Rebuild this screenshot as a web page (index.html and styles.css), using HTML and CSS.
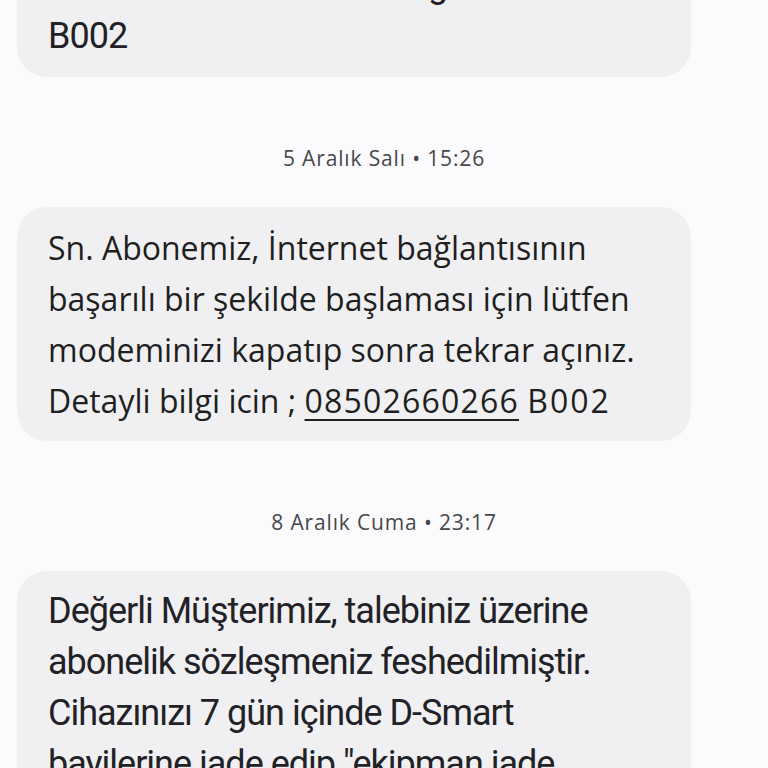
FILE: index.html
```html
<!DOCTYPE html>
<html lang="tr">
<head>
<meta charset="utf-8">
<link rel="stylesheet" href="styles.css">
</head>
<body>
<main class="thread">
  <div class="bubble bubble-first narrow">
    <p class="msg">Sn. Abonemiz randevu bilgileriniz<br>B002</p>
  </div>
  <div class="stamp">5 Aralık Salı • 15:26</div>
  <div class="bubble wide">
    <p class="msg">Sn. Abonemiz, İnternet bağlantısının<br>başarılı bir şekilde başlaması için lütfen<br>modeminizi kapatıp sonra tekrar açınız.<br>Detayli bilgi icin ; <span class="link">08502660266</span> <span class="code">B002</span></p>
  </div>
  <div class="stamp">8 Aralık Cuma • 23:17</div>
  <div class="bubble narrow">
    <p class="msg">Değerli Müşterimiz, talebiniz üzerine<br>abonelik sözleşmeniz feshedilmiştir.<br>Cihazınızı 7 gün içinde D-Smart<br>bayilerine iade edip "ekipman iade<br>formu" doldurmanız gerekmektedir.</p>
  </div>
</main>
</body>
</html>
```
FILE: styles.css
```css
html, body {
  margin: 0;
  padding: 0;
  background: #fbfbfd;
}
body {
  height: 768px;
  overflow: hidden;
}
.thread {
  display: flex;
  flex-direction: column;
  padding: 0 0 0 17px;
}
.bubble {
  width: 674px;
  box-sizing: border-box;
  background: #f0f0f2;
  border-radius: 30px;
  padding: 15px 20px 15px 31px;
}
.bubble-first {
  margin-top: -55px;
}
.msg {
  margin: 0;
  color: #1f1f1f;
  line-height: 51px;
  white-space: nowrap;
}
.wide .msg {
  font-family: "Open Sans", sans-serif;
  font-size: 32px;
}
.narrow .msg {
  font-family: "Roboto", sans-serif;
  font-size: 36px;
  letter-spacing: -1px;
  color: #222226;
}
.link {
  text-decoration: underline;
  text-underline-offset: 6px;
  text-decoration-thickness: 2px;
  letter-spacing: 1.2px;
}
.code {
  letter-spacing: 2px;
}
.stamp {
  margin: 67px 17px 35px 0;
  height: 28px;
  line-height: 28px;
  text-align: center;
  font-family: "Open Sans", sans-serif;
  font-size: 21px;
  letter-spacing: 0.85px;
  color: #47474c;
}
```
